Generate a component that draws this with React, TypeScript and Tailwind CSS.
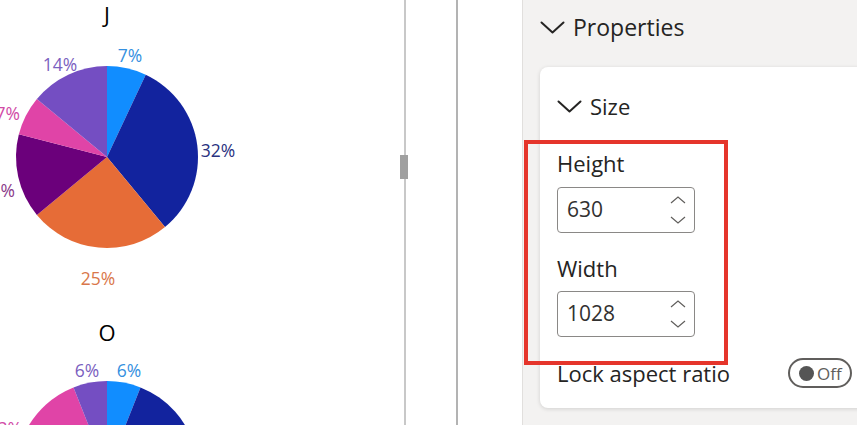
import React from 'react';

type Slice = { pct: number; color: string };
type Label = { text: string; color: string; x: number; y: number; anchor?: 'start' | 'middle' | 'end' };

const BLUE = '#118DFF';
const NAVY = '#12239E';
const ORANGE = '#E66C37';
const PLUM = '#6B007B';
const PINK = '#E044A7';
const VIOLET = '#744EC2';

const slicePath = (cx: number, cy: number, r: number, a0: number, a1: number) => {
    const rad = (a: number) => (a * Math.PI) / 180;
    const x0 = cx + r * Math.sin(rad(a0));
    const y0 = cy - r * Math.cos(rad(a0));
    const x1 = cx + r * Math.sin(rad(a1));
    const y1 = cy - r * Math.cos(rad(a1));
    const large = a1 - a0 > 180 ? 1 : 0;
    return `M${cx},${cy} L${x0},${y0} A${r},${r} 0 ${large} 1 ${x1},${y1} Z`;
};

const PieChart: React.FC<{ title: string; slices: Slice[]; labels: Label[]; cy: number; height: number }> = ({
    title,
    slices,
    labels,
    cy,
    height,
}) => {
    const cx = 107;
    const r = 91;
    let acc = 0;
    return (
        <div className="flex flex-col">
            <div className="w-[214px] h-[28px] flex items-center justify-center text-[22px] text-black leading-none">
                {title}
            </div>
            <svg width={404} height={height} className="overflow-visible">
                {slices.map((s, i) => {
                    const a0 = acc * 3.6;
                    acc += s.pct;
                    const a1 = acc * 3.6;
                    return <path key={i} d={slicePath(cx, cy, r, a0, a1)} fill={s.color} />;
                })}
                {labels.map((l, i) => (
                    <text
                        key={i}
                        x={cx + l.x}
                        y={cy + l.y}
                        fill={l.color}
                        fontSize={17.5}
                        textAnchor={l.anchor ?? 'middle'}
                        dominantBaseline="central"
                        fontFamily="'Open Sans', sans-serif"
                    >
                        {l.text}
                    </text>
                ))}
            </svg>
        </div>
    );
};

const Chevron: React.FC<{ className?: string }> = ({ className }) => (
    <svg viewBox="0 0 25 13" className={className} fill="none">
        <path d="M1.5 1.5 L12.5 11.5 L23.5 1.5" stroke="#252423" strokeWidth="2" strokeLinecap="round" strokeLinejoin="round" />
    </svg>
);

const Spinner = () => (
    <div className="flex flex-col items-center gap-[12px] mr-[8px]">
        <svg width="16" height="8" viewBox="0 0 16 8" fill="none">
            <path d="M1 7 L8 1 L15 7" stroke="#605e5c" strokeWidth="1.2" />
        </svg>
        <svg width="16" height="8" viewBox="0 0 16 8" fill="none">
            <path d="M1 1 L8 7 L15 1" stroke="#605e5c" strokeWidth="1.2" />
        </svg>
    </div>
);

const NumberField: React.FC<{ value: string }> = ({ value }) => (
    <div className="w-[138px] h-[46px] border border-[#8a8886] rounded-[4px] bg-white flex items-center justify-between pl-[9px]">
        <span className="text-[21px] text-[#323130]">{value}</span>
        <Spinner />
    </div>
);

export default function App() {
    return (
        <div className="flex w-[857px] h-[425px] overflow-hidden bg-white font-['Open_Sans',sans-serif]">
            {/* report canvas */}
            <div className="w-[404px] h-full overflow-hidden">
                <PieChart
                    title="J"
                    cy={129}
                    height={290}
                    slices={[
                        { pct: 7, color: BLUE },
                        { pct: 32, color: NAVY },
                        { pct: 25, color: ORANGE },
                        { pct: 15, color: PLUM },
                        { pct: 7, color: PINK },
                        { pct: 14, color: VIOLET },
                    ]}
                    labels={[
                        { text: '7%', color: '#3590e0', x: 23, y: -102 },
                        { text: '14%', color: '#7b5fc0', x: -47, y: -93 },
                        { text: '32%', color: '#2a3280', x: 111, y: -7 },
                        { text: '25%', color: '#d9774a', x: -9, y: 121 },
                        { text: '7%', color: '#d14aa6', x: -87, y: -44, anchor: 'end' },
                        { text: '15%', color: '#8a3a8a', x: -92, y: 33, anchor: 'end' },
                    ]}
                />
                <PieChart
                    title="O"
                    cy={126}
                    height={220}
                    slices={[
                        { pct: 6, color: BLUE },
                        { pct: 30, color: NAVY },
                        { pct: 20, color: ORANGE },
                        { pct: 15, color: PLUM },
                        { pct: 23, color: PINK },
                        { pct: 6, color: VIOLET },
                    ]}
                    labels={[
                        { text: '6%', color: '#7b5fc0', x: -20, y: -102 },
                        { text: '6%', color: '#3590e0', x: 22, y: -102 },
                        { text: '23%', color: '#d14aa6', x: -85, y: -44, anchor: 'end' },
                    ]}
                />
            </div>

            {/* resize handle */}
            <div className="w-[2px] h-full bg-[#c8c8c8] relative">
                <div className="absolute left-[-4px] top-[155px] w-[8px] h-[24px] bg-[#a0a0a0]" />
            </div>
            <div className="w-[50px]" />
            <div className="w-[2px] h-full bg-[#b3b3b3]" />
            <div className="w-[64px]" />

            {/* format pane */}
            <div className="relative flex-1 h-full bg-[#f3f2f1] border-l border-[#e1dfdd] overflow-hidden">
                <div className="h-[54px] flex items-center pl-[17px] gap-[8px]">
                    <Chevron className="w-[25px] h-[13px]" />
                    <span className="text-[23px] text-[#252423] leading-none">Properties</span>
                </div>
                <div className="mt-[13px] ml-[17px] w-[360px] h-[341px] bg-white rounded-lg shadow-[0_1px_4px_rgba(0,0,0,0.14)] pl-[17px] pt-[27px]">
                    <div className="h-[24px] flex items-center gap-[8px]">
                        <Chevron className="w-[25px] h-[13px]" />
                        <span className="text-[22px] text-[#252423] leading-none">Size</span>
                    </div>
                    <div className="mt-[32px] h-[26px] flex items-center text-[22px] text-[#252423]">Height</div>
                    <div className="mt-[11px]">
                        <NumberField value="630" />
                    </div>
                    <div className="mt-[22px] h-[26px] flex items-center text-[22px] text-[#252423]">Width</div>
                    <div className="mt-[10px]">
                        <NumberField value="1028" />
                    </div>
                    <div className="mt-[20px] h-[32px] flex items-center">
                        <span className="w-[231px] text-[22px] text-[#252423]">Lock aspect ratio</span>
                        <div className="w-[64px] h-[30px] rounded-full border-2 border-[#605e5c] flex items-center pl-[9px] gap-[3px]">
                            <div className="w-[15px] h-[15px] rounded-full bg-[#555555]" />
                            <span className="text-[17px] text-[#605e5c] leading-none">Off</span>
                        </div>
                    </div>
                </div>

                {/* highlight annotation */}
                <div className="absolute left-[1px] top-[140px] w-[204px] h-[225px] border-4 border-[#e5352b]" />
            </div>
        </div>
    );
}
